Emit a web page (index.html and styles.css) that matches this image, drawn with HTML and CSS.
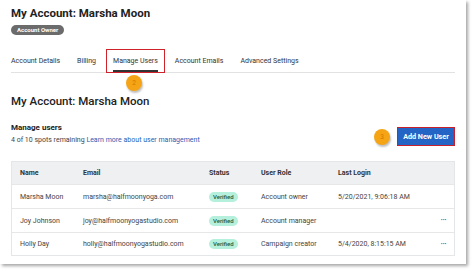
FILE: index.html
```html
<!DOCTYPE html>
<html>
<head>
<meta charset="utf-8">
<link rel="stylesheet" href="styles.css">
</head>
<body>
<div class="frame">
  <header class="top">
    <h1 class="title">My Account: Marsha Moon</h1>
    <span class="badge">Account Owner</span>
  </header>
  <nav class="tabs">
    <span class="tab">Account Details</span>
    <span class="tab">Billing</span>
    <span class="tab active">Manage Users<span class="hl"></span><span class="step step2">2</span></span>
    <span class="tab">Account Emails</span>
    <span class="tab">Advanced Settings</span>
  </nav>
  <h2 class="subtitle">My Account: Marsha Moon</h2>
  <div class="manage">
    <div class="manage-text">
      <div class="manage-title">Manage users</div>
      <div class="manage-sub">4 of 10 spots remaining <a class="link">Learn more about user management</a></div>
    </div>
    <div class="actions">
      <span class="step step3">3</span>
      <button class="btn">Add New User</button>
    </div>
  </div>
  <div class="table">
    <div class="row head">
      <span class="c-name">Name</span><span class="c-email">Email</span><span class="c-status">Status</span><span class="c-role">User Role</span><span class="c-login">Last Login</span><span class="c-more"></span>
    </div>
    <div class="row">
      <span class="c-name">Marsha Moon</span><span class="c-email">marsha@halfmoonyoga.com</span><span class="c-status"><span class="pill">Verified</span></span><span class="c-role">Account owner</span><span class="c-login">5/20/2021, 9:06:18 AM</span><span class="c-more"></span>
    </div>
    <div class="row">
      <span class="c-name">Joy Johnson</span><span class="c-email">joy@halfmoonyogastudio.com</span><span class="c-status"><span class="pill">Verified</span></span><span class="c-role">Account manager</span><span class="c-login"></span><span class="c-more">•••</span>
    </div>
    <div class="row last">
      <span class="c-name">Holly Day</span><span class="c-email">holly@halfmoonyogastudio.com</span><span class="c-status"><span class="pill">Verified</span></span><span class="c-role">Campaign creator</span><span class="c-login">5/4/2020, 8:15:15 AM</span><span class="c-more">•••</span>
    </div>
  </div>
</div>
</body>
</html>
```
FILE: styles.css
```css
* { box-sizing: border-box; }
html, body { margin: 0; padding: 0; background: #fff; }
body {
  font-family: Roboto, "Liberation Sans", Arial, sans-serif;
  color: #2b2b2b;
  width: 474px;
  height: 273px;
  overflow: hidden;
}
.frame {
  width: 466px;
  height: 264px;
  background: #fff;
  box-shadow: 2px 2px 3px rgba(0,0,0,0.35);
  padding: 6px 11px 0 11px;
}
.title {
  margin: 0;
  font-size: 11.5px;
  font-weight: 700;
  line-height: 14px;
  color: #222;
}
.badge {
  display: inline-block;
  margin-top: 5px;
  background: #6b6b6b;
  color: #fff;
  font-size: 6px;
  font-weight: 700;
  line-height: 10px;
  padding: 0 6px;
  border-radius: 5px;
  vertical-align: top;
}
.top { height: 35px; }
.tabs {
  display: flex;
  gap: 17px;
  margin-top: 14px;
  border-bottom: 1px solid #e2e2e2;
  width: 444px;
  height: 18px;
  padding-top: 1px;
}
.tab {
  position: relative;
  font-size: 7px;
  color: #333;
  line-height: 10px;
  height: 10px;
}
.tab.active::after {
  content: "";
  position: absolute;
  left: 0; right: 0;
  top: 14px;
  height: 2px;
  background: #333;
}
.hl {
  position: absolute;
  left: -7px; right: -7px;
  top: -7px;
  height: 24px;
  border: 1.5px solid #d0222b;
}
.step {
  display: flex;
  align-items: center;
  justify-content: center;
  width: 16px;
  height: 16px;
  border-radius: 50%;
  background: #f5a415;
  color: #d07a00;
  font-size: 6.5px;
  box-shadow: 1px 2px 2px rgba(0,0,0,0.25);
}
.step2 {
  position: absolute;
  left: 13px;
  top: 19px;
}
.subtitle {
  margin: 21px 0 0 0;
  font-size: 11.5px;
  font-weight: 500;
  line-height: 14px;
  color: #222;
}
.manage {
  display: flex;
  justify-content: space-between;
  align-items: flex-start;
  margin-top: 14px;
  width: 444px;
}
.manage-title {
  font-size: 8px;
  font-weight: 700;
  line-height: 12px;
  color: #222;
}
.manage-sub {
  font-size: 7px;
  line-height: 10px;
  margin-top: 1px;
  color: #444;
}
.link { color: #2861b5; }
.actions {
  display: flex;
  align-items: center;
  gap: 7px;
  margin-top: 5px;
}
.btn {
  background: #2464c4;
  color: #fff;
  border: 1.5px solid #c8202b;
  font-family: inherit;
  font-size: 7.2px;
  font-weight: 700;
  height: 19px;
  width: 58px;
  padding: 0;
}
.table {
  margin-top: 15px;
  width: 444px;
  border: 1px solid #e4e6e8;
  font-size: 7px;
  color: #444;
}
.row {
  display: flex;
  align-items: center;
  height: 24px;
  border-bottom: 1px solid #e7e7e7;
  padding-left: 8px;
}
.row.last { border-bottom: none; height: 22px; }
.row.head {
  background: #eef0f2;
  font-weight: 700;
  color: #333;
  height: 23px;
}
.c-name { width: 63px; }
.c-email { width: 126px; }
.c-status { width: 52px; }
.c-role { width: 77px; }
.c-login { width: 103px; }
.c-more { width: 13px; font-size: 4.5px; letter-spacing: 0.4px; color: #333; }
.pill {
  display: inline-block;
  background: #b4f0dc;
  color: #1d5a45;
  font-size: 6px;
  font-weight: 500;
  line-height: 10px;
  padding: 0 4px;
  border-radius: 5px;
}
```
